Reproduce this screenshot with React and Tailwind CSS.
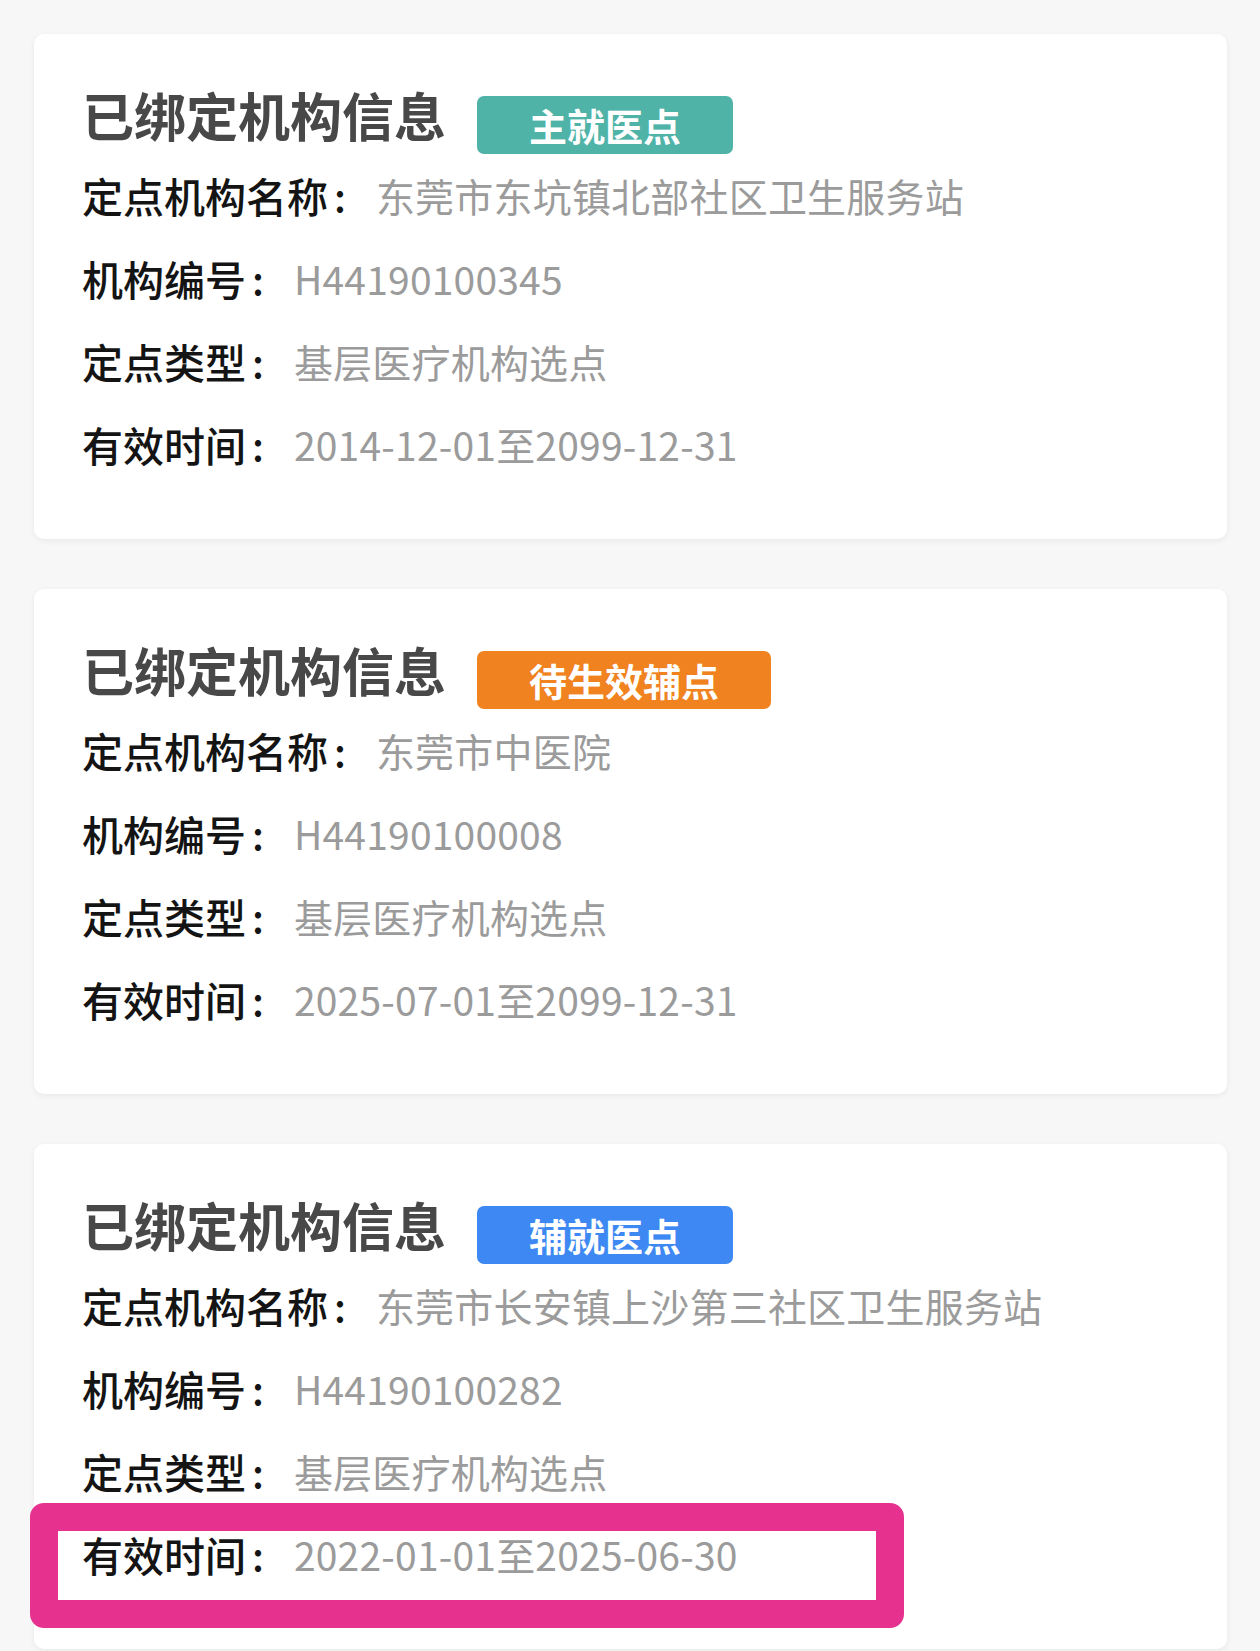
import React from "react";

const cards = [
  {
    tag: "主就医点",
    tagColor: "bg-[#4fb3a8]",
    rows: [
      ["定点机构名称", "东莞市东坑镇北部社区卫生服务站"],
      ["机构编号", "H44190100345"],
      ["定点类型", "基层医疗机构选点"],
      ["有效时间", "2014-12-01至2099-12-31"],
    ],
  },
  {
    tag: "待生效辅点",
    tagColor: "bg-[#f0821f]",
    rows: [
      ["定点机构名称", "东莞市中医院"],
      ["机构编号", "H44190100008"],
      ["定点类型", "基层医疗机构选点"],
      ["有效时间", "2025-07-01至2099-12-31"],
    ],
  },
  {
    tag: "辅就医点",
    tagColor: "bg-[#3d88f2]",
    highlightLast: true,
    rows: [
      ["定点机构名称", "东莞市长安镇上沙第三社区卫生服务站"],
      ["机构编号", "H44190100282"],
      ["定点类型", "基层医疗机构选点"],
      ["有效时间", "2022-01-01至2025-06-30"],
    ],
  },
];

function InfoRow({ label, value, highlight }) {
  return (
    <div className="relative flex items-center h-[83px] leading-[83px] whitespace-nowrap">
      <span className="text-[#141414] text-[41px] font-medium">{label}</span>
      <span className="text-[#141414] text-[40px] font-medium ml-[6px]">:</span>
      <span className="text-[#9b9b9b] text-[39px] ml-[30px] tracking-[0.2px]">{value}</span>
      {highlight && (
        <div className="absolute -left-[52px] -top-[10px] w-[874px] h-[125px] border-[28px] border-[#e6328e] rounded-[14px]" />
      )}
    </div>
  );
}

function OrgCard({ card }) {
  return (
    <section className="bg-white rounded-[10px] shadow-[0_2px_6px_rgba(0,0,0,0.06)] pt-[58px] pb-[53px] pl-[48px] pr-[40px]">
      <div className="flex items-start">
        <h2 className="text-[52px] leading-[46px] font-bold text-[#484848]">已绑定机构信息</h2>
        <span
          className={`${card.tagColor} mt-[4px] ml-[31px] h-[58px] px-[52px] rounded-[7px] text-white text-[38px] leading-[58px] font-bold`}
        >
          {card.tag}
        </span>
      </div>
      {card.rows.map(([label, value], i) => (
        <InfoRow
          key={label}
          label={label}
          value={value}
          highlight={card.highlightLast && i === card.rows.length - 1}
        />
      ))}
    </section>
  );
}

export default function App() {
  return (
    <main
      className="bg-[#f7f7f7] min-h-screen pt-[34px] pl-[34px] pr-[33px] pb-[20px] flex flex-col gap-[50px]"
      style={{ fontFamily: '"Noto Sans CJK SC", "Noto Sans", sans-serif' }}
    >
      {cards.map((c) => (
        <OrgCard key={c.tag} card={c} />
      ))}
    </main>
  );
}
